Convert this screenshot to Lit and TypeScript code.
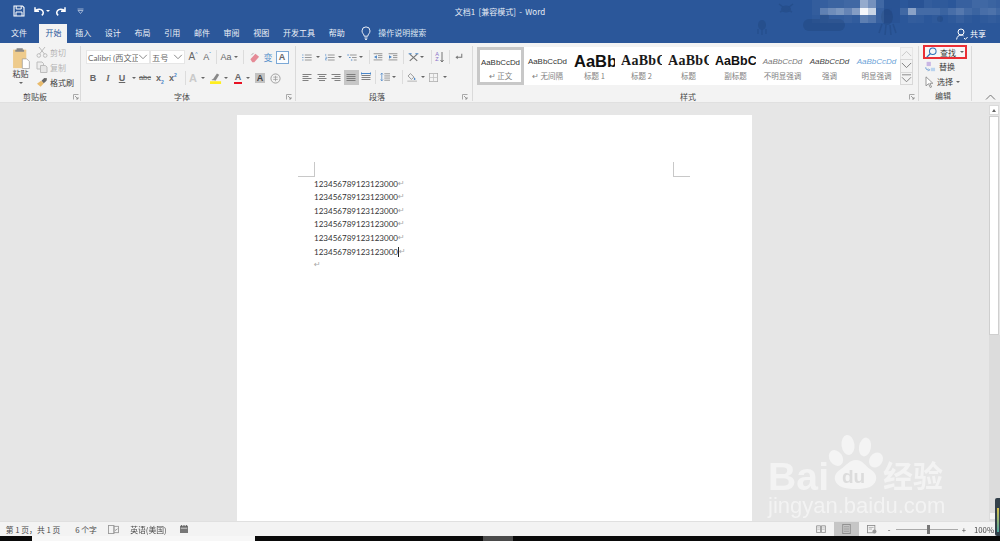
import { LitElement, html, css, svg } from "lit";
import { customElement } from "lit/decorators.js";

const G = "#747474";
const L = "#bcbcbc";
const B = "#4a86c8";

const ico = (w: number, h: number, body: unknown, vw = w, vh = h) =>
  html`<svg class="ic" width=${w} height=${h} viewBox="0 0 ${vw} ${vh}" fill="none">${body}</svg>`;
const tri = html`<span class="tri"></span>`;

/* Flow row: each item is [page x of centre, width, content]; gaps are computed from the data. */
type Item = [number, number, unknown];
const row = (start: number, items: Item[], cls = "row") => {
  let pos = start;
  return html`<div class=${cls}>${items.map(([cx, w, t]) => {
    const left = cx - w / 2;
    const ml = left - pos;
    pos = left + w;
    return html`<span class="cell" style="margin-left:${ml}px;width:${w}px">${t}</span>`;
  })}</div>`;
};
const launcher = ico(6, 6, svg`<path d="M.5 5.5V.5h5" stroke="#a8a8a8"/><path d="M2 2l3 3M5 3v2H3" stroke="#888" stroke-width=".8"/>`);
const vsep = html`<span class="vs"></span>`;
const lines = (ws: number[], y0: number, step: number, align: "l" | "c" | "r" | "j", color = G) =>
  ws.map((w, i) => {
    const x = align === "c" ? (14 - w) / 2 : align === "r" ? 11.5 - w : 2.5;
    return svg`<path d="M${x} ${y0 + i * step}h${w}" stroke=${color} stroke-width=".9"/>`;
  });

const icons = {
  save: ico(12, 12, svg`<path d="M1 1h8.5L11 2.5V11H1z" stroke="#fff" stroke-width="1.1"/><path d="M3.2 1v3h5V1M3 11V7h6v4" stroke="#fff"/>`),
  undo: ico(13, 11, svg`<path d="M3 1.2v4h4M3.4 5C5 2.8 9 2.6 10.6 4.8c1 1.5.6 3.4-.8 4.6" stroke="#fff" stroke-width="1.5"/>`),
  redo: ico(13, 11, svg`<path d="M10 1.2v4H6M9.6 5C8 2.8 4 2.6 2.4 4.8c-1 1.5-.6 3.4.8 4.6" stroke="#fff" stroke-width="1.5"/>`),
  custom: ico(7, 6, svg`<path d="M.5 1h6M1 2.5l2.5 3 2.5-3z" stroke="#c7d4e8" stroke-width=".7"/>`),
  bulb: ico(10, 14, svg`<path d="M3.2 10.2c0-2-2.2-2.8-2.2-5.3a4 4 0 018 0c0 2.5-2.2 3.3-2.2 5.3zM3.5 12h3M4 13.4h2" stroke="#fff" stroke-width=".9"/>`),
  person: ico(12, 12, svg`<circle cx="5" cy="4" r="3" stroke="#fff"/><path d="M.6 11.5c.4-3 2-4.4 4.4-4.4 1 0 1.8.2 2.5.7M8 10l1.4 1.4L11.6 9" stroke="#fff"/>`),
  paste: ico(18, 22, svg`<rect x="1" y="3" width="15" height="21" fill="#eecb8c"/><path d="M5 3V1.5h7V3h1.5v2.5h-10V3z" fill="#888"/><path d="M11.5 13.5h5l3 3v8h-8z" fill="#fff" stroke="#999" stroke-width=".8"/>`, 20, 25),
  scissors: ico(12, 12, svg`<path d="M3 1l5.5 7M9 1L3.5 8" stroke=${L}/><circle cx="2.8" cy="9.5" r="1.8" stroke=${L}/><circle cx="9.2" cy="9.5" r="1.8" stroke=${L}/>`),
  copy: ico(12, 12, svg`<path d="M1 1h5l1.5 1.5V8H1z" stroke=${L} fill="#eee"/><path d="M4.5 4.5h4.8L11 6v5.5H4.5z" stroke=${L} fill="#e6e6e6"/>`),
  brush: ico(12, 10, svg`<path d="M1 7.5L5.5 4l3 3L5 10.6z" fill="#e9bb6c"/><path d="M6 4l3-3 3 .5-.5 2.5-3 2.8z" fill="#666"/>`, 13, 11),
  eraser: ico(11, 11, svg`<path d="M1.5 8l5.5-6 4 3.2-5.2 6H3.6z" fill="#e58a96"/><path d="M2.5 3.5L5 1" stroke="#aaa"/>`, 12, 12),
  highlight: ico(12, 12, svg`<path d="M3 8l4.5-6.5 2.5 1.6L6 9.4z" fill="#888"/><path d="M2 8.4h3" stroke="#888"/><rect x="0" y="10" width="12" height="3" fill="#ffee20"/>`, 13, 13),
  redbar: ico(10, 2, svg`<rect width="12" height="3" fill="#e81123"/>`, 12, 3),
  circleZ: ico(11, 11, svg`<circle cx="6" cy="6" r="5" stroke="#999"/><path d="M3.5 4.5h5M6 3v6M3.5 7h5" stroke="#999" stroke-width=".8"/>`, 12, 12),
  bullets: ico(10, 9, svg`<path d="M.5 2.5h2M.5 6h2M.5 9.5h2" stroke=${B} stroke-width="1.6" stroke-dasharray="1.4 .6"/><path d="M4 2.5h9.5M4 6h9.5M4 9.5h9.5" stroke=${G}/>`, 14, 12),
  numbers: ico(10, 9, svg`<path d="M1 1v3M.5 5.5h2v2h-2v2h2" stroke=${B} stroke-width=".8"/><path d="M4 2.5h9.5M4 6h9.5M4 9.5h9.5" stroke=${G}/>`, 14, 12),
  multi: ico(10, 9, svg`<path d="M.5 2.5h2M3 6h2M5.5 9.5h2" stroke=${B} stroke-width="1.4"/><path d="M4 2.5h9.5M7 6h6.5M9.5 9.5h4" stroke=${G}/>`, 14, 12),
  outdent: ico(10, 8, svg`<path d="M.5 1h12M6.5 3.6h6M6.5 6.3h6M.5 9.5h12" stroke=${G}/><path d="M5 3v5L1 5.5z" fill=${B}/>`, 13, 11),
  indent: ico(10, 8, svg`<path d="M.5 1h12M6.5 3.6h6M6.5 6.3h6M.5 9.5h12" stroke=${G}/><path d="M1 3v5l4-2.5z" fill=${B}/>`, 13, 11),
  cross: ico(11, 9, svg`<path d="M2 1.5l10 9M12 1.5l-10 9" stroke=${G} stroke-width="1.5"/><path d="M.5 1h4M9.5 1h4" stroke=${B} stroke-width="1.4"/>`, 14, 12),
  pilcrow: ico(9, 8, svg`<path d="M10.5 1v5H4" stroke=${G} stroke-width="1.4"/><path d="M5 3.5L1.8 6 5 8.5z" fill=${G}/>`, 12, 11),
  left: ico(14, 9, lines([9, 6, 9, 6], 1.5, 2, "l")),
  center: ico(14, 9, lines([9, 6, 9, 6], 1.5, 2, "c")),
  right: ico(14, 9, lines([9, 6, 9, 6], 1.5, 2, "r")),
  justify: ico(14, 9, lines([9, 9, 9, 9], 1.5, 2, "j")),
  distribute: ico(14, 10, svg`${lines([9, 9, 9], 3.5, 2, "j")}<path d="M2.5 .5v2M11.5 .5v2M2.5 1.5h9" stroke=${B}/>`),
  spacing: ico(10, 10, svg`<path d="M2.5 1v11M.8 3l1.7-2 1.7 2M.8 10l1.7 2 1.7-2" stroke=${B}/><path d="M6 2h8M6 5h8M6 8h8M6 11h8" stroke=${G}/>`, 14, 13),
  bucket: ico(11, 10, svg`<path d="M5 2l5 5-3.5 3.5-5-5z" stroke=${G}/><path d="M11 7.5c1 1.5 1.3 2 1.3 2.6a1.2 1.2 0 01-2.4 0c0-.6.4-1.1 1.1-2.6z" fill=${B}/><path d="M.5 13h14" stroke="#999"/>`, 16, 14),
  border: ico(9, 9, svg`<rect x=".5" y=".5" width="11" height="11" stroke="#aaa"/><path d="M6 .5v11M.5 6h11" stroke="#c0c0c0"/>`, 12, 12),
  up: ico(11, 7, svg`<path d="M1 7l5.5-5.5L12 7" stroke="#c6c6c6" stroke-width="1.1"/>`, 13, 8),
  down: ico(11, 7, svg`<path d="M1 1l5.5 5.5L12 1" stroke="#777" stroke-width="1.1"/>`, 13, 8),
  more: ico(11, 9, svg`<path d="M1 1h11" stroke="#777"/><path d="M1 4l5.5 5.5L12 4" stroke="#777" stroke-width="1.1"/>`, 13, 11),
  chevron: ico(10, 6, svg`<path d="M1 1l4.500 4.500L10 1" stroke="#777"/>`, 11, 7),
  search: ico(11, 11, svg`<circle cx="8" cy="5" r="3.9" stroke="#2f6fb7" stroke-width="1.2"/><path d="M5 8l-4 4" stroke="#2f6fb7" stroke-width="1.5"/>`, 13, 13),
  replace: ico(12, 11, svg`<rect x="3" y="1" width="5" height="5" fill="#c9b6e4"/><rect x="8" y="8" width="5" height="4" fill="#b9d3ee"/><path d="M2 7.5c0 2 1 3 3 3M5 9l1.5 1.5L5 12" stroke=${B}/>`, 14, 13),
  cursor: ico(10, 12, svg`<path d="M2 1v10.500l3-2.500 2 4.500 1.500-.7-2-4.300H10z" stroke="#888" fill="#fff"/>`, 11, 14),
  collapse: ico(11, 6, svg`<path d="M1 5.500L5.500 1 10 5.500" stroke="#777"/>`),
  proof: ico(11, 9, svg`<rect x=".5" y=".5" width="6" height="9" stroke="#999"/><rect x="6.5" y="1.5" width="5" height="7" stroke="#999"/><path d="M7.5 5l1 1 2-2" stroke="#888"/>`, 12, 10),
  macro: ico(8, 8, svg`<rect x="0" y="1" width="10" height="9" fill="#777"/><rect x="1" y="3.5" width="8" height="1" fill="#ddd"/><path d="M2 0v2M5 0v2M8 0v2" stroke="#444"/>`, 10, 10),
  read: ico(10, 8, svg`<path d="M.5 1h5v8.5h-5zM6.5 1h5v8.5h-5z" stroke="#888"/><path d="M1.5 3.5h3M1.5 5.5h3M7.5 3.5h3M7.5 5.5h3" stroke="#aaa" stroke-width=".7"/>`, 12, 10),
  printv: ico(9, 10, svg`<rect x=".5" y=".5" width="9" height="11" stroke="#888"/><path d="M2 3h6M2 5h6M2 7h6M2 9h6" stroke="#999" stroke-width=".8"/>`, 10, 12),
  webv: ico(10, 9, svg`<rect x=".5" y=".5" width="9" height="9" stroke="#888"/><path d="M2 3h6M2 5h4" stroke="#999" stroke-width=".8"/><circle cx="9" cy="8" r="2.5" fill="#999"/>`, 12, 11),
};

const doodles = svg`
  <g fill="#264f8d">
    <ellipse cx="786" cy="9" rx="5" ry="3.5"/><path d="M779 4l4 3M793 4l-4 3M780 12l4-2M792 12l-4-2" stroke="#264f8d" stroke-width="1.5"/>
    <ellipse cx="762" cy="25" rx="4" ry="5"/><path d="M758 29v5M762 29v6M766 29v5" stroke="#264f8d" stroke-width="1.3"/>
    <path d="M809 19h30a6 6 0 010 12h-30a6 6 0 010-12z"/><rect x="820" y="14" width="9" height="6"/>
    <ellipse cx="887" cy="17" rx="6" ry="8"/><path d="M882 24l-3 9M886 25l-1 10M890 25l1 10M893 24l3 9" stroke="#264f8d" stroke-width="1.5"/>
    <ellipse cx="940" cy="19" rx="3" ry="3"/>
  </g>`;

const mosaic = [
  [.04,.05,.08,.08,.1,.1,.5,.35,.1,-.08,-.08,0,-.06,-.06,.04,.02,.02,0,.06,.06,.1,.1,.08,.06],
  [.04,.25,.32,.38,.28,.42,.95,.75,.06,-.1,-.06,.1,.45,.12,.12,.12,.08,.14,.2,.12,.08,.14,.16,.1],
  [.02,.03,.04,.04,.06,.03,.24,.18,.06,-.08,-.06,0,.04,.03,0,.02,0,.02,.06,.02,0,.02,.04,.02],
];

const gallery: [string, string, string][] = [
  ["AaBbCcDd", "↵ 正文", "s-normal"],
  ["AaBbCcDd", "↵ 无间隔", "s-normal"],
  ["AaBb", "标题 1", "s-h1"],
  ["AaBbC", "标题 2", "s-h2"],
  ["AaBbC", "标题", "s-h2"],
  ["AaBbC", "副标题", "s-sub"],
  ["AaBbCcDd", "不明显强调", "s-em1"],
  ["AaBbCcDd", "强调", "s-em2"],
  ["AaBbCcDd", "明显强调", "s-em3"],
];

@customElement("app-root")
export class AppRoot extends LitElement {
  static styles = css`
    :host { display: block; width: 1000px; height: 541px; overflow: hidden; background: #000; }
    * { box-sizing: border-box; }
    .app { position: relative; width: 1000px; height: 541px; display: flex; flex-direction: column; overflow: hidden;
      font-family: "Noto Sans CJK SC", "Liberation Sans", sans-serif; font-size: 8px; color: #4a4a4a; filter: blur(.42px); }
    .ic { display: block; flex: none; }
    .tri { display: block; width: 0; height: 0; border: 2px solid transparent; border-top: 2.5px solid #666; border-bottom: 0; }
    .row { display: flex; align-items: center; height: 14px; }
    .cell { display: flex; align-items: center; justify-content: center; flex: none; height: 100%; white-space: nowrap; }
    .vs { display: block; width: 1px; height: 14px; background: #dcdcdc; }

    .top { position: relative; height: 43px; flex: none; background: #2b579a; color: #fff; }
    .deco { position: absolute; left: 0; top: 0; }
    .mosaic { position: absolute; left: 812px; top: 0; display: grid; grid-template-columns: repeat(24, 8px); grid-auto-rows: 7.5px; }
    .titlerow { position: relative; display: grid; grid-template-columns: 1fr auto 1fr; align-items: center; height: 22px; }
    .qat .cell { height: 22px; }
    .qat .tri { border-top-color: #fff; }
    .title { font-size: 8px; color: #e6ecf5; word-spacing: 1.5px; }
    .tabs { position: relative; display: flex; align-items: stretch; height: 21px; padding: 2px 0 0 5px; gap: 1.7px; }
    .tab { width: 28px; display: flex; align-items: center; justify-content: center; color: #eef2f8; padding-bottom: 2px; }
    .tab.first { margin-right: 4.8px; }
    .tab.on { background: #f3f3f3; color: #2b579a; margin-right: 0; }
    .tab.wide { width: 44px; margin-left: 0; }
    .helpbox { display: flex; align-items: center; margin-left: 9px; gap: 7px; color: #dfe7f2; padding-bottom: 2px; }
    .share { margin-left: auto; display: flex; align-items: center; gap: 2px; padding: 0 14px 0 0; color: #fff; }

    .ribbon { display: flex; height: 60px; flex: none; padding: 3px 0 1px; background: #f3f3f3; border-bottom: 1px solid #e0e0e0; }
    .group { display: flex; flex-direction: column; flex: none; border-right: 1px solid #dadada; }
    .g1 { width: 81px; } .g2 { width: 215px; } .g3 { width: 177px; } .g4 { width: 446px; } .g5 { width: 53px; }
    .g6 { border: 0; flex: 1; }
    .body { height: 45px; flex: none; }
    .lab { height: 11px; flex: none; color: #4a4a4a; }
    .two { padding-top: 4px; display: flex; flex-direction: column; gap: 7px; }
    .para { gap: 6px; }

    .clip { display: flex; }
    .pastecol { width: 25px; margin-left: 8px; display: flex; flex-direction: column; align-items: center; padding-top: 1px; }
    .pastecol span { line-height: 10px; color: #3c3c3c; }
    .pastecol .tri { margin-top: 3px; }
    .small { margin: -1.5px 0 0 3px; display: flex; flex-direction: column; }
    .sbtn { display: flex; align-items: center; height: 15px; gap: 2px; color: #b4b4b4; }
    .sbtn.live { color: #3c3c3c; }

    .combo { display: flex; align-items: center; justify-content: space-between; width: 100%; height: 14px; background: #fff;
      border: 1px solid #e6e6e6; padding: 0 1px; overflow: hidden; color: #666; }
    .combo span { overflow: hidden; white-space: nowrap; font-family: "Lato", "Noto Sans CJK SC", sans-serif; font-size: 8.2px; }
    .glyph { font-family: "Liberation Sans", sans-serif; color: #666; font-size: 9px; line-height: 1; position: relative; }
    .glyph.bold { font-weight: 700; }
    .glyph.it { font-style: italic; font-family: "Liberation Serif", serif; font-weight: 700; }
    .glyph sup, .glyph sub { font-size: 5px; line-height: 0; color: #4a86c8; }
    .abc { text-decoration: line-through; font-size: 7.5px; }
    .ua { text-decoration: underline; }
    .boxa { display: flex; width: 13px; height: 13px; border: 1px solid #7ba8d6; align-items: center; justify-content: center; background: #fbfdff; }
    .shada { display: flex; width: 10px; height: 10px; background: #c2c2c2; align-items: center; justify-content: center; color: #444; font-weight: 700; }
    .stack { display: flex; flex-direction: column; align-items: center; }
    .ghost { color: #cacaca; font-size: 11px; font-weight: 700; }
    .big { font-size: 10px; }
    .wen { color: #5a92cc; font-size: 9px; font-family: "Noto Sans CJK SC", sans-serif; }
    .active { display: flex; align-items: center; justify-content: center; width: 15px; height: 15px; background: #c6c6c6; }
    .az { font-size: 5.5px; line-height: 5.5px; color: #8a70c8; text-align: center; }

    .stylesbody { display: flex; padding: 1px 0 0 4px; }
    .gal { display: flex; height: 38px; background: #fff; }
    .sty { width: 47px; height: 38px; display: flex; flex-direction: column; align-items: center; overflow: hidden; padding: 0 3px; }
    .sty.sel { border: 3px solid #c8c8c8; padding: 0; }
    .sample { height: 24px; width: 100%; display: flex; align-items: center; justify-content: center; overflow: hidden; white-space: nowrap; color: #333; font-family: "Liberation Sans", sans-serif; font-size: 7.9px; padding-top: 4px; }
    .sel .sample { height: 21px; padding-top: 4px; }
    .name { color: #808080; font-size: 7.5px; line-height: 10px; white-space: nowrap; }
    .sample.s-h1 { font-size: 16.5px; font-weight: 700; color: #111; justify-content: flex-start; }
    .sample.s-h2 { font-family: "Liberation Serif", serif; font-size: 14px; font-weight: 700; color: #1a1a1a; justify-content: flex-start; letter-spacing: .3px; }
    .sample.s-sub { font-size: 12.5px; font-weight: 700; color: #111; justify-content: flex-start; }
    .sample.s-em1 { font-style: italic; color: #777; font-size: 8px; }
    .sample.s-em2 { font-style: italic; color: #444; font-size: 8px; }
    .sample.s-em3 { font-style: italic; color: #6ba3d8; font-size: 8px; }
    .gscroll { width: 13px; height: 38px; display: flex; flex-direction: column; background: #f3f3f3; }
    .gscroll span { flex: 1; border: 1px solid #d8d8d8; margin-top: -1px; display: flex; align-items: center; justify-content: center; }
    .gscroll span:first-child { margin-top: 0; border-color: #e6e6e6; }

    .edit { display: flex; flex-direction: column; padding: 0 0 0 4px; margin-top: -1px; }
    .find { display: flex; align-items: center; width: 44px; height: 14px; border: 2px solid #ea2e35; padding-left: 1px; background: #f7f7f7; color: #3c3c3c; white-space: nowrap; }
    .find span { margin-left: 3px; flex: none; }
    .find .tri { margin-left: 4px; }
    .eb { display: flex; align-items: center; height: 15px; gap: 3px; padding-left: 1px; color: #3c3c3c; white-space: nowrap; }

    .doc { display: flex; flex: 1; min-height: 0; background: #e6e6e6; }
    .canvas { flex: 1; overflow: hidden; padding: 12px 0 0 237px; }
    .page { width: 515px; height: 600px; background: #fff; padding: 47px 62px 0 61px; }
    .marks { display: flex; justify-content: space-between; height: 15px; }
    .mark { width: 17px; height: 15px; border-bottom: 1px solid #c8c8c8; }
    .mark.l { border-right: 1px solid #c8c8c8; }
    .mark.r { border-left: 1px solid #c8c8c8; }
    .text { padding-left: 16px; font-family: "Lato", "Liberation Sans", sans-serif; font-size: 8.05px; color: #333; }
    .ln { display: flex; align-items: center; height: 13.55px; }
    .ret { font-family: "DejaVu Sans", sans-serif; font-size: 8px; line-height: 8px; color: #a8a8a8; }
    .caret { width: 1px; height: 10px; background: #222; }
    .scroll { width: 11px; flex: none; padding-top: 2px; display: flex; flex-direction: column; background: #e6e6e6; }
    .sup { height: 10px; margin-right: 1px; background: #fff; border: 1px solid #dadada; display: flex; align-items: center; justify-content: center; }
    .sup i { display: block; width: 0; height: 0; border: 2.5px solid transparent; border-bottom: 3px solid #666; border-top: 0; }
    .thumb { height: 219px; margin: 1px 1px 0 0; background: #fff; border: 1px solid #cfcfcf; }
    .track { flex: 1; background: #dcdcdc; }

    .status { display: flex; align-items: center; height: 15px; flex: none; background: #f3f3f3; border-top: 1px solid #e0e0e0; }
    .status .row { height: 15px; width: 100%; }
    .status .cell { color: #4a4a4a; font-size: 7.8px; }
    .viewon { display: flex; width: 25px; height: 14px; background: #c6c6c6; align-items: center; justify-content: center; }
    .slider { display: block; width: 62px; height: 1px; background: #aaa; position: relative; }
    .knob { position: absolute; left: 31px; top: -4px; width: 3px; height: 9px; background: #777; }
    .task { display: flex; height: 5px; flex: none; background: #0a0a0a; }
    .task .w { margin-left: 32px; width: 223px; background: #f7f7f7; }
    .task .g { margin-left: 228px; width: 30px; background: #4a4a4a; }

    .wm { position: absolute; left: 760px; top: 428px; width: 200px; height: 95px; color: rgba(255,255,255,.52); pointer-events: none; font-family: "Liberation Sans", sans-serif; }
    .wm svg { position: absolute; left: 0; top: 0; }
    .wm b, .wm em { position: absolute; white-space: nowrap; font-style: normal; line-height: 1; }
    .wm .bai { left: 8px; top: 31px; font-size: 39px; line-height: .9; font-weight: 700; letter-spacing: .2px; }
    .wm .du { left: 82px; top: 39px; font-size: 19px; font-weight: 700; color: #dcdcdc; }
    .wm .jy { left: 123px; top: 31px; font-family: "Noto Sans CJK SC", sans-serif; font-size: 30px; font-weight: 700; }
    .wm .url { left: 8px; top: 67px; font-size: 22px; font-weight: 400; }
    .side { position: absolute; left: 995px; top: 498px; width: 5px; height: 38px; background: #33404a; border-radius: 2px 0 0 2px; }
    .side i { display: block; margin: 10px 0 0 2px; width: 2px; height: 24px; background: linear-gradient(#d9c24b, #4fa7a1); }
    .wsq { position: absolute; left: 990px; top: 513px; width: 5px; height: 6px; background: #f4f4f4; }
  `;

  render() {
    const digits = "123456789123123000";
    return html`<div class="app">
      <div class="top">
        <svg class="deco" width="1000" height="43">${doodles}</svg>
        <div class="mosaic">${mosaic.flat().map((a) => html`<span style="background:${a >= 0 ? `rgba(255,255,255,${a})` : `rgba(20,40,90,${-a})`}"></span>`)}</div>
        <div class="titlerow">
          ${row(0, [[19, 14, icons.save], [38, 14, icons.undo], [48, 6, tri], [61, 14, icons.redo], [80, 8, icons.custom]], "row qat")}
          <div class="title">文档1 [兼容模式] - Word</div>
          <div></div>
        </div>
        <div class="tabs">
          <span class="tab first">文件</span><span class="tab on">开始</span>
          <span class="tab">插入</span><span class="tab">设计</span><span class="tab">布局</span><span class="tab">引用</span><span class="tab">邮件</span><span class="tab">审阅</span><span class="tab">视图</span>
          <span class="tab wide">开发工具</span><span class="tab">帮助</span>
          <span class="helpbox">${icons.bulb}<span>操作说明搜索</span></span>
          <span class="share">${icons.person}<span>共享</span></span>
        </div>
      </div>

      <div class="ribbon">
        <div class="group g1">
          <div class="body clip">
            <div class="pastecol">${icons.paste}<span>粘贴</span><i class="tri"></i></div>
            <div class="small">
              <div class="sbtn">${icons.scissors}<span>剪切</span></div>
              <div class="sbtn">${icons.copy}<span>复制</span></div>
              <div class="sbtn live">${icons.brush}<span>格式刷</span></div>
            </div>
          </div>
          ${row(0, [[35, 30, "剪贴板"], [76, 6, launcher]], "row lab")}
        </div>

        <div class="group g2">
          <div class="body two">
            ${row(81, [
              [118, 64, html`<div class="combo"><span>Calibri (西文正</span>${icons.chevron}</div>`],
              [167.5, 35, html`<div class="combo"><span>五号</span>${icons.chevron}</div>`],
              [193, 12, html`<span class="glyph big">A<sup>^</sup></span>`],
              [207, 12, html`<span class="glyph">A<sup>ˇ</sup></span>`],
              [216.5, 1, vsep],
              [226, 14, html`<span class="glyph">Aa</span>`],
              [236, 6, tri],
              [243.5, 1, vsep],
              [254, 12, icons.eraser],
              [268, 12, html`<span class="wen">变</span>`],
              [282, 13, html`<span class="boxa glyph bold">A</span>`],
            ])}
            ${row(81, [
              [93, 12, html`<span class="glyph bold">B</span>`],
              [108, 12, html`<span class="glyph it">I</span>`],
              [122, 12, html`<span class="glyph bold ua">U</span>`],
              [134, 6, tri],
              [145, 16, html`<span class="glyph abc">abc</span>`],
              [160, 12, html`<span class="glyph bold">x<sub>2</sub></span>`],
              [173, 12, html`<span class="glyph bold">x<sup>2</sup></span>`],
              [185.5, 1, vsep],
              [193, 12, html`<span class="glyph ghost">A</span>`],
              [203, 6, tri],
              [216, 13, icons.highlight],
              [226, 6, tri],
              [238, 13, html`<span class="stack"><span class="glyph bold">A</span>${icons.redbar}</span>`],
              [248, 6, tri],
              [260, 12, html`<span class="shada glyph">A</span>`],
              [275, 12, icons.circleZ],
            ])}
          </div>
          ${row(81, [[182, 20, "字体"], [289, 6, launcher]], "row lab")}
        </div>

        <div class="group g3">
          <div class="body two para">
            ${row(296, [
              [307, 14, icons.bullets], [318, 6, tri], [330, 14, icons.numbers], [340, 6, tri], [352, 14, icons.multi], [361, 6, tri],
              [369.5, 1, vsep], [378, 13, icons.outdent], [393, 13, icons.indent], [403.5, 1, vsep],
              [413, 14, icons.cross], [422, 6, tri], [431.5, 1, vsep],
              [437, 6, html`<span class="glyph az">A<br />Z</span>`],
              [442, 4, html`<svg class="ic" width="4" height="11" viewBox="0 0 4 11" fill="none"><path d="M2 0v10M.5 8L2 10l1.5-2" stroke="#747474"/></svg>`],
              [449.5, 1, vsep], [458, 12, icons.pilcrow],
            ])}
            ${row(296, [
              [307, 14, icons.left], [322, 14, icons.center], [336, 14, icons.right],
              [351, 15, html`<span class="active">${icons.justify}</span>`],
              [366, 14, icons.distribute], [375.5, 1, vsep], [385, 14, icons.spacing], [394, 6, tri], [402.5, 1, vsep],
              [412, 16, icons.bucket], [423, 6, tri], [433, 12, icons.border], [445, 6, tri],
            ])}
          </div>
          ${row(296, [[377, 20, "段落"], [465, 6, launcher]], "row lab")}
        </div>

        <div class="group g4">
          <div class="body stylesbody">
            <div class="gal">
              ${gallery.map(([s, n, c], i) => html`<div class="sty ${i === 0 ? "sel" : ""}"><div class="sample ${c}">${s}</div><div class="name">${n}</div></div>`)}
            </div>
            <div class="gscroll"><span>${icons.up}</span><span>${icons.down}</span><span>${icons.more}</span></div>
          </div>
          ${row(473, [[688, 20, "样式"], [912, 6, launcher]], "row lab")}
        </div>

        <div class="group g5">
          <div class="body edit">
            <div class="find">${icons.search}<span>查找</span><i class="tri"></i></div>
            <div class="eb">${icons.replace}<span>替换</span></div>
            <div class="eb">${icons.cursor}<span>选择</span><i class="tri"></i></div>
          </div>
          ${row(919, [[943, 20, "编辑"]], "row lab")}
        </div>

        <div class="group g6">
          <div class="body"></div>
          ${row(972, [[990, 11, icons.collapse]], "row lab")}
        </div>
      </div>

      <div class="doc">
        <div class="canvas">
          <div class="page">
            <div class="marks"><div class="mark l"></div><div class="mark r"></div></div>
            <div class="text">
              ${[0, 1, 2, 3, 4].map(() => html`<div class="ln">${digits}<span class="ret">↵</span></div>`)}
              <div class="ln">${digits}<span class="caret"></span><span class="ret">↵</span></div>
              <div class="ln"><span class="ret">↵</span></div>
            </div>
          </div>
        </div>
        <div class="scroll">
          <div class="sup"><i></i></div>
          <div class="thumb"></div>
          <div class="track"></div>
        </div>
      </div>

      <div class="status">
        ${row(0, [
          [33, 60, "第 1 页，共 1 页"],
          [86, 26, "6 个字"],
          [113, 12, icons.proof],
          [148.5, 40, "英语(美国)"],
          [184, 10, icons.macro],
          [821, 12, icons.read],
          [846.5, 25, html`<span class="viewon">${icons.printv}</span>`],
          [872, 12, icons.webv],
          [889, 8, "-"],
          [926.5, 62, html`<span class="slider"><span class="knob"></span></span>`],
          [964, 8, "+"],
          [984, 20, "100%"],
        ])}
      </div>
      <div class="task"><span class="w"></span><span class="g"></span></div>

      <div class="wm">
        <svg width="200" height="95" viewBox="760 428 200 95">
          <g fill="rgba(255,255,255,.55)">
            <ellipse cx="848" cy="445" rx="6.5" ry="10" transform="rotate(-8 848 445)"/>
            <ellipse cx="865" cy="447" rx="6" ry="9.5" transform="rotate(10 865 447)"/>
            <ellipse cx="836" cy="458" rx="6.5" ry="8.5" transform="rotate(-35 836 458)"/>
            <ellipse cx="876" cy="460" rx="6.5" ry="8" transform="rotate(35 876 460)"/>
            <path d="M856 460c7 0 9 6 14 9 5 3 7 7 6 11-2 7-9 9-20 9s-19-2-21-9c-1-4 1-8 6-11 5-3 8-9 15-9z"/>
          </g>
        </svg>
        <b class="bai">Bai</b><b class="du">du</b><b class="jy">经验</b><em class="url">jingyan.baidu.com</em>
      </div>
      <div class="wsq"></div>
      <div class="side"><i></i></div>
    </div>`;
  }
}
